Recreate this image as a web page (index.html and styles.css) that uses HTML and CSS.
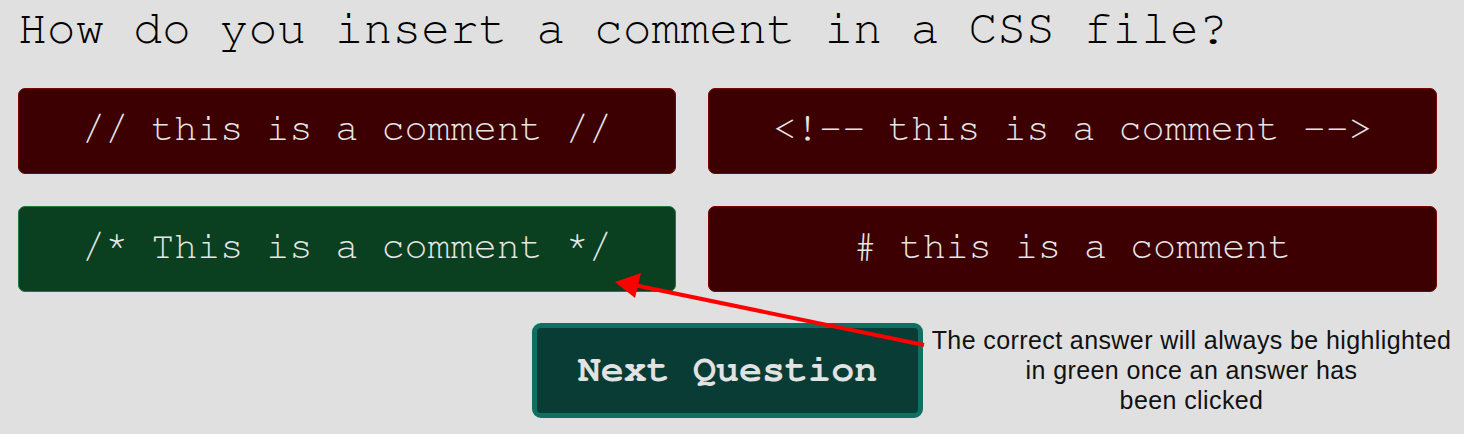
FILE: index.html
```html
<!DOCTYPE html>
<html lang="en">
<head>
<meta charset="utf-8">
<title>Quiz</title>
<link rel="stylesheet" href="styles.css">
</head>
<body>
<main class="page">
  <h1 class="question">How do you insert a comment in a CSS file?</h1>
  <div class="answers">
    <button class="answer wrong">// this is a comment //</button>
    <button class="answer wrong">&lt;!-- this is a comment --&gt;</button>
    <button class="answer correct">/* This is a comment */</button>
    <button class="answer wrong"># this is a comment</button>
  </div>
  <div class="next-row">
    <button class="next">Next Question</button>
  </div>
  <p class="note">The correct answer will always be highlighted<br>in green once an answer has<br>been clicked</p>
  <svg class="arrow" width="1464" height="434" viewBox="0 0 1464 434" aria-hidden="true">
    <line x1="924" y1="340" x2="634" y2="280" stroke="#ff0000" stroke-width="4"/>
    <polygon points="615,277 641,268 635,293" fill="#ff0000"/>
  </svg>
</main>
</body>
</html>
```

FILE: styles.css
```css
html, body {
  margin: 0;
  padding: 0;
  background: #e0e0e0;
}

.page {
  position: relative;
  width: 1464px;
  height: 434px;
  padding: 0 18px;
  box-sizing: border-box;
  font-family: "Nimbus Mono PS", "Nimbus Mono L", "FreeMono", "Courier", "Liberation Mono", monospace;
}

.question {
  margin: 5px 0 0;
  font-size: 48px;
  line-height: 48px;
  font-weight: normal;
  color: #000;
  white-space: nowrap;
}

.answers {
  display: grid;
  grid-template-columns: 658px 729px;
  gap: 32px;
  margin-top: 35px;
  width: max-content;
}

.answer {
  font-family: inherit;
  font-size: 38.4px;
  line-height: 44px;
  padding: 18px 0 22px;
  border-radius: 7px;
  color: #e6e6e6;
  text-align: center;
  white-space: pre;
  cursor: pointer;
}

.wrong {
  background: #3c0003;
  border: 1px solid #7a0505;
}

.correct {
  background: #0a3f1f;
  border: 1px solid #1f7a3b;
}

.next-row {
  display: flex;
  justify-content: center;
  width: 1419px;
  margin-top: 31px;
}

.next {
  font-family: inherit;
  font-size: 38.4px;
  font-weight: bold;
  line-height: 45px;
  padding: 19px 41px 21px;
  background: #083c34;
  border: 5px solid #0f6f60;
  border-radius: 9px;
  color: #e2e2e2;
  white-space: nowrap;
  cursor: pointer;
}

.note {
  position: absolute;
  left: 920px;
  top: 320px;
  width: 543px;
  margin: 0;
  font-family: "Liberation Sans", Arial, sans-serif;
  font-size: 25px;
  line-height: 30px;
  text-align: center;
  color: #111;
  letter-spacing: 0.4px;
}

.arrow {
  position: absolute;
  left: 0;
  top: 0;
  pointer-events: none;
}
```
